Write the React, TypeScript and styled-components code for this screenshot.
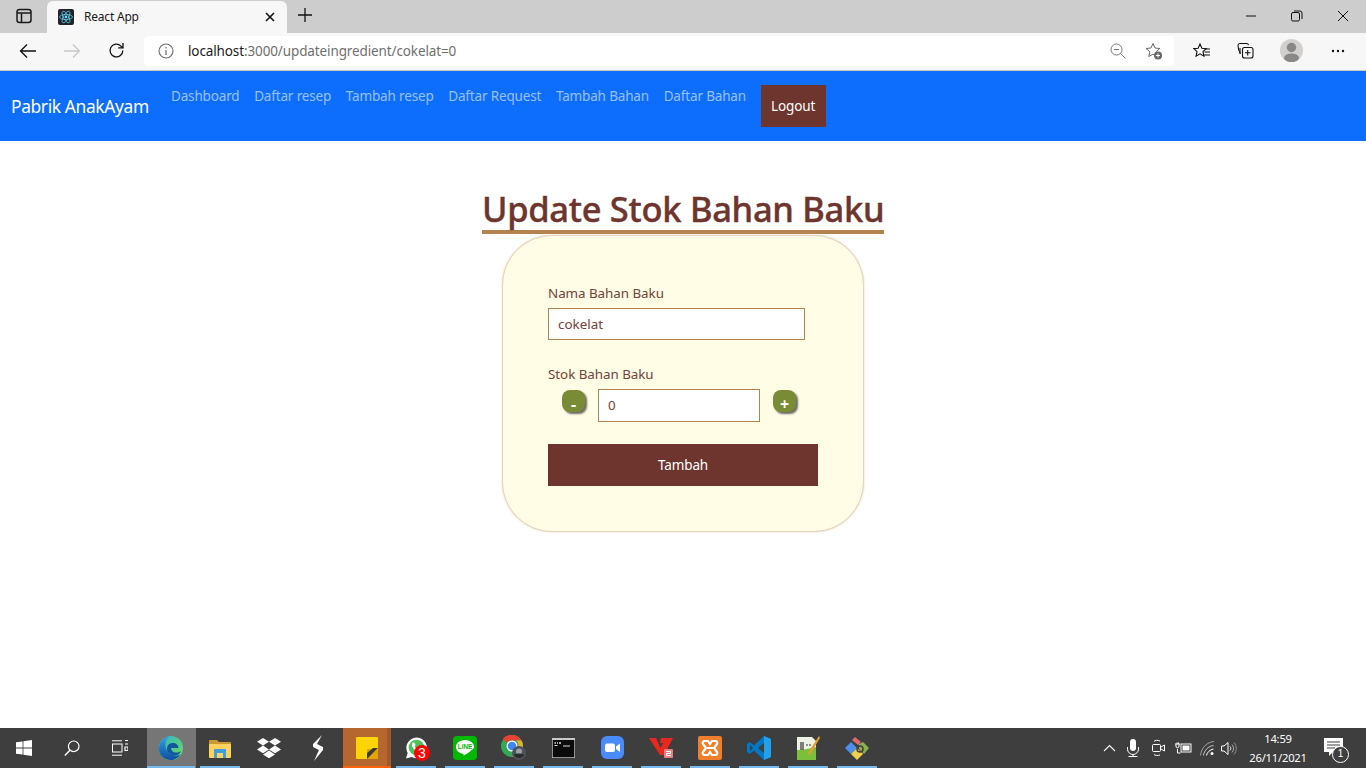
import React from "react";
import styled, { createGlobalStyle } from "styled-components";

const Global = createGlobalStyle`
  html, body { margin: 0; padding: 0; height: 100%; overflow: hidden; background: #fff; }
  #root { height: 100%; }
  * { box-sizing: border-box; }
  body { font-family: "Noto Sans", "Open Sans", sans-serif; }
`;

const Page = styled.div`
  height: 768px; width: 1366px; display: flex; flex-direction: column; overflow: hidden;
`;
const TabStrip = styled.div`
  height: 33px; background: #cdcdcd; display: flex; align-items: flex-end; flex: none;
`;
const SideToggle = styled.div`
  width: 47px; height: 33px; display: flex; align-items: center; justify-content: center; padding-bottom: 2px;
`;
const Tab = styled.div`
  width: 240px; height: 32px; background: #f7f7f7; border-radius: 6px 6px 0 0; display: flex; align-items: center;
  padding: 0 11px 1px; font-size: 12px; color: #1a1a1a;
`;
const TabTitle = styled.span`
  margin-left: 10px; flex: 1; font-size: 12px; letter-spacing: -0.2px;
`;
const NewTab = styled.div`
  width: 36px; height: 33px; display: flex; align-items: center; justify-content: center; padding-bottom: 4px;
`;
const Spacer = styled.div`flex: 1;`;
const WinBtn = styled.div`
  width: 46px; height: 33px; display: flex; align-items: center; justify-content: center; padding-bottom: 2px;
`;
const Toolbar = styled.div`
  height: 38px; flex: none; background: #f7f7f7; border-bottom: 1px solid #c9c9c9; display: flex; align-items: center; padding-bottom: 2px;
`;
const NavIcon = styled.div<{ $w: number }>`
  width: ${(p) => p.$w}px; height: 32px; display: flex; align-items: center; justify-content: center; flex: none;
`;
const Address = styled.div`
  width: 1030px; height: 30px; background: #fff; border-radius: 4px; display: flex; align-items: center; padding-left: 14px; flex: none;
`;
const Url = styled.span`
  margin-left: 14px; font-size: 13.5px; color: #6f6f6f; letter-spacing: -0.12px; flex: 1;
  b { font-weight: 400; color: #1c1c1c; }
`;
const AddrIcons = styled.div`
  display: flex; align-items: center; gap: 19px; padding-right: 11px;
`;
const Navbar = styled.nav`
  height: 70px; flex: none; background: #0d6efd; display: flex; align-items: flex-start; padding-left: 11px;
`;
const Brand = styled.a`
  font-size: 17.4px; color: #fff; margin-top: 22px; width: 160px; letter-spacing: -0.37px; line-height: 26px; flex: none;
`;
const NavLink = styled.a`
  font-size: 13.5px; color: rgba(255, 255, 255, 0.58); margin-top: 15px; margin-right: 14.7px; line-height: 20px; letter-spacing: -0.16px; white-space: nowrap;
`;
const Logout = styled.button`
  width: 65px; height: 42px; margin-top: 14px; background: #6d352d; color: #fff; border: 0; font: 13.5px "Noto Sans", sans-serif; letter-spacing: -0.1px; padding: 0;
`;
const Main = styled.main`
  flex: 1; background: #fff; display: flex; flex-direction: column; align-items: center; padding-top: 44px;
`;
const Title = styled.h1`
  margin: 0; height: 49px; width: 402px; border-bottom: 4px solid #b5834f; color: #6d352d; font-size: 34.5px; font-weight: 500; -webkit-text-stroke: 0.4px #6d352d; line-height: 48px; text-align: center; white-space: nowrap; letter-spacing: -0.3px;
`;
const Card = styled.div`
  width: 362px; height: 297px; background: #fffde6; border: 1px solid #e6d3bb; box-shadow: 0 0 2px #e3cfb4; border-radius: 50px; padding: 45px 0 0 45px; margin-top: 1px;
`;
const Label = styled.label`
  display: block; font-size: 13.4px; color: #74423a; line-height: 24px; margin-bottom: 3px; letter-spacing: -0.05px;
`;
const TextField = styled.div<{ $w: number; $h: number }>`
  width: ${(p) => p.$w}px; height: ${(p) => p.$h}px; background: #fff; border: 1px solid #b5834f; padding-left: 9px; font-size: 13.4px; color: #74423a; line-height: ${(p) => p.$h - 2}px; flex: none;
`;
const Stepper = styled.div`
  display: flex; align-items: flex-start; padding-left: 14px; height: 33px;
`;
const Round = styled.div<{ $before: number; $after: number }>`
  width: 23px; height: 22px; margin: 1px ${(p) => p.$after}px 0 ${(p) => p.$before}px; padding-top: 7px; border-radius: 8px; background: #7a8b36; box-shadow: 2px 2px 2px #6b6b63; color: #fff; font-size: 16px; font-weight: 700; text-align: center; line-height: 15px; flex: none;
`;
const Submit = styled.button`
  display: block; width: 270px; height: 42px; margin-top: 22px; background: #6d352d; color: #fff; border: 0; font: 13.5px "Noto Sans", sans-serif; letter-spacing: -0.1px; padding: 0 0 1px;
`;
const Gap = styled.div`height: 22px;`;
const Taskbar = styled.footer`
  height: 40px; flex: none; background: #3e3e3e; display: flex; align-items: stretch; color: #fff;
`;
const TaskIcon = styled.div<{ $w?: number; $mode?: string; $shift?: number }>`
  position: relative; width: ${(p) => p.$w ?? 49}px; flex: none; display: flex; align-items: center; justify-content: center; padding: 0 ${(p) => p.$shift ?? 1}px 1px 0;
  background: ${(p) => (p.$mode === "focus" ? "#767676" : p.$mode === "orange" ? "linear-gradient(90deg,#b5672f 0 44px,#a05a2a 44px 48px,#3e3e3e 48px)" : "transparent")};
  ${(p) => p.$mode === "focus" && "&::after{content:'';position:absolute;left:0;right:1px;bottom:0;height:2px;background:#76b9ed;}"}
  ${(p) => p.$mode === "orange" && "&::after{content:'';position:absolute;left:0;right:1px;bottom:0;height:2px;background:#f7630c;}"}
  ${(p) => p.$mode === "run" && "&::after{content:'';position:absolute;left:4px;right:5px;bottom:0;height:2px;background:#76b9ed;}"}
`;
const Badge = styled.span`
  position: absolute; left: 22px; top: 17px; width: 16px; height: 16px; border-radius: 50%; background: #f00; color: #fff; font-size: 14px; line-height: 16px; text-align: center; font-family: "Liberation Sans", sans-serif;
`;
const Tray = styled.div`
  display: flex; align-items: center; margin-left: auto; height: 100%;
`;
const TrayIcon = styled.div<{ $w: number }>`
  width: ${(p) => p.$w}px; display: flex; align-items: center; justify-content: center; flex: none;
`;
const Clock = styled.div`
  width: 78px; text-align: center; font-size: 11.2px; line-height: 19px; letter-spacing: -0.2px; color: #fff;
`;
const Notify = styled.div`
  position: relative; width: 32px; height: 100%; display: flex; align-items: center; justify-content: center; margin-right: 17px; padding-bottom: 2px;
`;
const NotifyCount = styled.span`
  position: absolute; left: 15px; top: 18px; width: 17px; height: 17px; border: 1.5px solid #fff; border-radius: 50%; background: #3e3e3e; font-size: 10px; line-height: 14px; text-align: center; color: #fff; font-family: "Liberation Sans", sans-serif;
`;

const s = { fill: "none", stroke: "#1a1a1a", strokeWidth: 1.3 };

const Icons = {
  side: <svg width="16" height="16" viewBox="0 0 16 16"><rect x="1" y="1.5" width="14" height="13" rx="2.5" {...s} strokeWidth={1.5}/><path d="M1 5h14M5.5 5v9.5" {...s} strokeWidth={1.5}/></svg>,
  react: <svg width="16" height="16" viewBox="0 0 16 16"><rect width="16" height="16" rx="2" fill="#20232a"/><circle cx="8" cy="8" r="1.4" fill="#61dafb"/><g fill="none" stroke="#61dafb" strokeWidth=".7"><ellipse cx="8" cy="8" rx="6.5" ry="2.6"/><ellipse cx="8" cy="8" rx="6.5" ry="2.6" transform="rotate(60 8 8)"/><ellipse cx="8" cy="8" rx="6.5" ry="2.6" transform="rotate(120 8 8)"/></g></svg>,
  close: <svg width="12" height="12" viewBox="0 0 12 12"><path d="M2 2l8 8M10 2l-8 8" stroke="#111" strokeWidth="1.6" fill="none"/></svg>,
  plus: <svg width="16" height="16" viewBox="0 0 16 16"><path d="M8 1v14M1 8h14" stroke="#111" strokeWidth="1.3" fill="none"/></svg>,
  min: <svg width="12" height="12" viewBox="0 0 12 12"><path d="M1 6h10" stroke="#111" strokeWidth="1" fill="none"/></svg>,
  restore: <svg width="12" height="12" viewBox="0 0 12 12"><rect x=".5" y="2.5" width="8" height="8.5" rx="1.5" fill="none" stroke="#111"/><path d="M3 1h6a2 2 0 0 1 2 2v6" fill="none" stroke="#111"/></svg>,
  x: <svg width="12" height="12" viewBox="0 0 12 12"><path d="M1 1l10 10M11 1L1 11" stroke="#111" strokeWidth="1" fill="none"/></svg>,
  back: <svg width="18" height="16" viewBox="0 0 18 16"><path d="M17 8H1.5M8 1.5L1.5 8 8 14.5" stroke="#111" strokeWidth="1.3" fill="none"/></svg>,
  fwd: <svg width="18" height="16" viewBox="0 0 18 16"><path d="M1 8h15.5M10 1.5L16.5 8 10 14.5" stroke="#c8c8c8" strokeWidth="1.3" fill="none"/></svg>,
  reload: <svg width="17" height="17" viewBox="0 0 17 17"><path d="M14.800 8.500a6.400 6.400 0 1 1-2-4.600l2 1.800" {...s} stroke="#111"/><path d="M15 1v4.800h-4.800" {...s} stroke="#111"/></svg>,
  info: <svg width="16" height="16" viewBox="0 0 16 16"><circle cx="8" cy="8" r="7" fill="none" stroke="#6b6b6b" strokeWidth="1.1"/><path d="M8 7v5" stroke="#6b6b6b" strokeWidth="1.2"/><circle cx="8" cy="4.800" r=".8" fill="#6b6b6b"/></svg>,
  zoom: <svg width="16" height="16" viewBox="0 0 16 16"><circle cx="6.500" cy="6.500" r="5.500" fill="none" stroke="#777" strokeWidth="1"/><path d="M10.500 10.500l5 5M3.800 6.500h5.400" stroke="#777" strokeWidth="1" fill="none"/></svg>,
  favAdd: <svg width="18" height="18" viewBox="0 0 18 18"><path d="M8 1.500l2 4.500 4.800.5-3.600 3.200 1 4.800L8 12.200l-4.200 2.300 1-4.800L1 6.500 5.900 6z" fill="none" stroke="#666" strokeWidth="1"/><circle cx="13" cy="13.500" r="4" fill="#666"/><path d="M13 11.500v4M11 13.500h4" stroke="#fff"/></svg>,
  favs: <svg width="18" height="16" viewBox="0 0 18 16"><path d="M7 1l1.900 4.200 4.300.4-3.200 3 .9 4.600L7 10.900l-3.900 2.300.9-4.600-3.200-3 4.300-.4z" fill="none" stroke="#111" strokeWidth="1.1"/><path d="M12 6h5M11.500 9h5.500M11 12h6" stroke="#111" strokeWidth="1"/></svg>,
  coll: <svg width="17" height="17" viewBox="0 0 17 17"><path d="M3 12V6M1 3.500a2 2 0 0 1 2-2h6.500a2 2 0 0 1 2 1.600" fill="none" stroke="#111" strokeWidth="1.1"/><path d="M1 3.500c0 3 1 6 2.500 8" fill="none" stroke="#111" strokeWidth="1.1"/><rect x="5.500" y="5.500" width="10.500" height="10.500" rx="2" fill="#f7f7f7" stroke="#111" strokeWidth="1.1"/><path d="M10.700 8v5.500M8 10.700h5.500" stroke="#111" strokeWidth="1.1"/></svg>,
  avatar: <svg width="23" height="23" viewBox="0 0 23 23"><defs><clipPath id="av"><circle cx="11.500" cy="11.500" r="11.500"/></clipPath></defs><circle cx="11.500" cy="11.500" r="11.500" fill="#d2d0ce"/><g clipPath="url(#av)" fill="#8a8886"><circle cx="11.500" cy="8.500" r="4.700"/><ellipse cx="11.500" cy="19" rx="7.500" ry="4.500"/></g></svg>,
  more: <svg width="14" height="4" viewBox="0 0 14 4"><circle cx="2" cy="2" r="1.200" fill="#111"/><circle cx="7" cy="2" r="1.200" fill="#111"/><circle cx="12" cy="2" r="1.200" fill="#111"/></svg>,
  win: <svg width="16" height="16" viewBox="0 0 16 16" fill="#fff"><path d="M0 2.300l6.600-.9v6.200H0zM7.400 1.300L16 0v7.600H7.400zM0 8.400h6.600v6.200L0 13.700zM7.400 8.400H16V16l-8.600-1.200z"/></svg>,
  search: <svg width="16" height="16" viewBox="0 0 16 16"><circle cx="9.700" cy="6.300" r="5.300" fill="none" stroke="#fff" strokeWidth="1.200"/><path d="M6 10.200L.8 15.400" stroke="#fff" strokeWidth="1.400"/></svg>,
  view: <svg width="16" height="16" viewBox="0 0 16 16" fill="none" stroke="#fff"><path d="M0 .8h10M0 15.200h10"/><rect x=".5" y="4" width="9.500" height="8"/><path d="M13 .5h3M13 4h3M13 7v3.500h3V7z" strokeWidth="1.200"/></svg>,
  edge: <svg width="24" height="24" viewBox="0 0 24 24"><defs><linearGradient id="e1" x1="0" y1="0" x2="1" y2="1"><stop offset="0" stopColor="#2fb5c8"/><stop offset="1" stopColor="#6fdc5a"/></linearGradient><linearGradient id="e2" x1="0" y1="0" x2="0" y2="1"><stop offset="0" stopColor="#2f9fe6"/><stop offset="1" stopColor="#0f4f9e"/></linearGradient></defs><circle cx="12" cy="12" r="12" fill="url(#e1)"/><path d="M0 12C.5 5 6 .5 11 .5c-3 1.500-5 5-4.500 9 .5 6 5 10 10 10 2 0 4-.5 5.500-1.500-2.500 3.500-6 6-10 6C4 24-.5 18 0 12z" fill="url(#e2)"/><path d="M8 13c0-4 2.500-6 6-6 3 0 5.500 2 5.500 5h-7.500c0 2.500 2 4.500 5 4.500 2 0 3.500-.5 5-1.500-1 3-4 4.500-6.500 4.500-4 0-7.500-3-7.500-6.500z" fill="#14579f"/></svg>,
  folder: <svg width="22" height="20" viewBox="0 0 22 20"><path d="M0 3a1 1 0 0 1 1-1h7l2 2h11a1 1 0 0 1 1 1v2H0z" fill="#c99a2e"/><path d="M0 6h22v13a1 1 0 0 1-1 1H1a1 1 0 0 1-1-1z" fill="#fdd35e"/><path d="M5 11h12v9h-3v-5H8v5H5z" fill="#3f9ee0"/></svg>,
  dropbox: <svg width="24" height="22" viewBox="0 0 24 22" fill="#fff"><path d="M6 1l6 3.800-6 3.800L0 4.800zM18 1l6 3.800-6 3.800-6-3.800zM0 12.400l6-3.800 6 3.800-6 3.800zM18 8.600l6 3.800-6 3.800-6-3.800zM6 17.400l6-3.800 6 3.800-6 3.800z"/></svg>,
  sublime: <svg width="12" height="26" viewBox="0 0 12 26" fill="#fff"><path d="M10 0L1 9v3l6 3L2 26l9-11v-3L5 9z"/></svg>,
  sticky: <svg width="22" height="22" viewBox="0 0 22 22"><path d="M1 0h20a1 1 0 0 1 1 1v20a1 1 0 0 1-1 1H1a1 1 0 0 1-1-1V1a1 1 0 0 1 1-1z" fill="#ffd500"/><path d="M22 12v9a1 1 0 0 1-1 1H11v-10z" fill="#e6a400"/><path d="M11 22V16l6-5h5z" fill="#3a3a3a"/><path d="M22 11v10a1 1 0 0 1-1 1h-9z" fill="#e6a400"/></svg>,
  whatsapp: <svg width="23" height="22" viewBox="0 0 23 22"><path d="M1 21.500l1.700-5.500A10.300 10.300 0 1 1 6.800 20z" fill="#fff"/><circle cx="11.500" cy="10.500" r="7.800" fill="#4bc15a"/><path d="M8 5.500c-1.500 1-1.700 3.300.2 5.800s4.500 4.500 6.800 4.200c1.500-.2 2.300-1.300 2.200-2.300l-2.600-1.400-1.200 1.100c-1.800-.7-3.100-2-3.800-3.800l1-1.200L9.400 5.500z" fill="#fff"/></svg>,
  line: <svg width="24" height="24" viewBox="0 0 24 24"><rect width="24" height="24" rx="4" fill="#00b900"/><path d="M12 4C7 4 3 7.200 3 11c0 3.400 3 6.200 7.200 6.900.5.100.5.700.3 1.800 1-.5 5-3 7-4.800 2-1.600 3.500-2.400 3.500-3.900 0-3.800-4-7-9-7z" fill="#fff"/><text x="12" y="13.300" textAnchor="middle" fontSize="6.300" fontWeight="700" fontFamily="Liberation Sans, sans-serif" fill="#00b900">LINE</text></svg>,
  chrome: <svg width="26" height="26" viewBox="0 0 26 26"><circle cx="11" cy="11" r="11" fill="#34a853"/><path d="M11 0a11 11 0 0 1 9.500 5.500H11A5.500 5.500 0 0 0 6 8L2 3.500A11 11 0 0 1 11 0z" fill="#ea4335"/><path d="M20.500 5.500A11 11 0 0 1 11 22l5-8a5.500 5.500 0 0 0-1-8.500z" fill="#e8b32a"/><circle cx="11" cy="11" r="5.500" fill="#fff"/><circle cx="11" cy="11" r="4.300" fill="#4285f4"/><circle cx="18" cy="18" r="7" fill="#4e5358"/><circle cx="18" cy="16.500" r="3" fill="#9aa0a6"/><path d="M13 20c3-2 7-2 10 0-2 4-8 4-10 0z" fill="#2a2a2a"/></svg>,
  cmd: <svg width="23" height="20" viewBox="0 0 23 20"><rect width="23" height="20" fill="#c9c9c9"/><rect x=".7" y="2" width="21.600" height="17.300" fill="#0b0b0b"/><path d="M2.500 5h1.500M5 5h1M7 5h2" stroke="#ddd" strokeWidth="1.300"/><path d="M2.500 7.500h3M11 8h7" stroke="#ddd"/></svg>,
  zoomApp: <svg width="23" height="23" viewBox="0 0 23 23"><rect width="23" height="23" rx="6" fill="#4a8cff"/><rect x="4" y="7.500" width="10" height="8.500" rx="2" fill="#fff"/><path d="M15 10.500l4-3v8.500l-4-3z" fill="#fff"/></svg>,
  v: <svg width="24" height="21" viewBox="0 0 24 21"><path d="M0 1h7l4.500 10L14 6h-3l1-5h12l-9 17h-4zM15 4h3l-2 3z" fill="#e8271f"/><rect x="15" y="12" width="9" height="9" rx="1" fill="#e78080"/><path d="M17 14.500h4.500v2h-4v2h4.500" stroke="#fff" fill="none"/></svg>,
  xampp: <svg width="24" height="24" viewBox="0 0 24 24"><rect width="24" height="24" rx="2" fill="#ef7f2a"/><path d="M6 5h4l2 3 2-3h4a2 2 0 0 1 1 3l-3 4 3 4a2 2 0 0 1-1 3h-4l-2-3-2 3H6a2 2 0 0 1-1-3l3-4-3-4a2 2 0 0 1 1-3z" fill="none" stroke="#fff" strokeWidth="2.200"/><path d="M8 12h8" stroke="#fff" strokeWidth="2"/></svg>,
  vscode: <svg width="24" height="24" viewBox="0 0 24 24"><path d="M17 0l7 3v18l-7 3L7 14.500 3 18l-3-2v-8l3-2 4 3.500z" fill="#0078c8"/><path d="M17 0l7 3v18l-7 3z" fill="#22a0ea"/><path d="M17 7l-6 5 6 5z" fill="#3e3e3e"/><path d="M3 9l3 3-3 3z" fill="#3e3e3e"/></svg>,
  notepad: <svg width="24" height="24" viewBox="0 0 24 24"><path d="M1 1h15l4 4v19H1z" fill="#eef2e4"/><path d="M1 14c5 0 12-1 19-3v13H1z" fill="#7cbf3a"/><path d="M5 6v8M7 6v8M10 9h2M13 9h2" stroke="#333" strokeWidth="1.200"/><path d="M23 0L13 15l-1 4 3-2L24 2z" fill="#e0a030"/></svg>,
  git: <svg width="24" height="24" viewBox="0 0 24 24"><path d="M0 12l6-6 6 6-6 6z" fill="#4d8ee8"/><path d="M14 8l4-2 6 6-5 6-5-5z" fill="#8bb14a"/><path d="M6 18l6-6 6 6-6 6z" fill="#f0d050"/><path d="M7 4l3-3 6 5-3 3z" fill="#e0686e"/><circle cx="15" cy="13" r="3" fill="none" stroke="#3e3e3e" strokeWidth="1.500"/></svg>,
  chevron: <svg width="13" height="8" viewBox="0 0 13 8"><path d="M1 7l5.500-5.500L12 7" fill="none" stroke="#fff" strokeWidth="1.100"/></svg>,
  mic: <svg width="12" height="18" viewBox="0 0 12 18"><rect x="3" y="0" width="6" height="12" rx="3" fill="#fff"/><path d="M.5 8v2a5.500 5.500 0 0 0 11 0V8M6 15.500V17M1.500 17.500h9" fill="none" stroke="#fff"/></svg>,
  cam: <svg width="13" height="18" viewBox="0 0 13 18" fill="none" stroke="#fff"><path d="M2 2.500C3 1 6 1 8 2M2 15.500c1 1.200 4 1.200 6 .5"/><rect x=".5" y="5.500" width="8" height="7" rx="1"/><path d="M9 8l3.500-2v6L9 10"/></svg>,
  batt: <svg width="17" height="13" viewBox="0 0 17 13"><path d="M0 2h5M1 2v3a2 2 0 0 0 3 0V2M2 .5V2M3.500.5V2M2.500 7v4h3" fill="none" stroke="#fff"/><rect x="6" y="2" width="10" height="8" fill="none" stroke="#fff"/><rect x="7.500" y="3.500" width="7" height="5" fill="#fff"/></svg>,
  wifi: <svg width="15" height="15" viewBox="0 0 15 15" fill="none" stroke="#fff"><path d="M.5 14.500C1 7 7 1 14 .5" opacity=".5"/><path d="M3.500 14.500c.5-5 5-9.500 10-10" opacity=".7"/><path d="M6.500 14.500c.5-3 3.500-6 7-6.500"/><circle cx="12" cy="12.500" r="1.500" fill="#fff" stroke="none"/></svg>,
  vol: <svg width="16" height="15" viewBox="0 0 16 15" fill="none" stroke="#fff"><path d="M.5 5h2.500L7 1.500v12L3 10H.5z"/><path d="M9 5.500c1 1.200 1 2.800 0 4"/><path d="M11 3.500c2 2.500 2 5.500 0 8" opacity=".6"/><path d="M13 1.500c3 3.500 3 8.500 0 12" opacity=".4"/></svg>,
  msg: <svg width="19" height="18" viewBox="0 0 19 18"><path d="M0 0h19v14H9l-4 4v-4H0z" fill="#fff"/><path d="M3 4h13M3 7h13M3 10h8" stroke="#3e3e3e"/></svg>,
};

const apps: { k: keyof typeof Icons; mode: string; badge?: string }[] = [
  { k: "edge", mode: "focus" },
  { k: "folder", mode: "run" },
  { k: "dropbox", mode: "" },
  { k: "sublime", mode: "" },
  { k: "sticky", mode: "orange" },
  { k: "whatsapp", mode: "run", badge: "3" },
  { k: "line", mode: "run" },
  { k: "chrome", mode: "run" },
  { k: "cmd", mode: "run" },
  { k: "zoomApp", mode: "run" },
  { k: "v", mode: "run" },
  { k: "xampp", mode: "run" },
  { k: "vscode", mode: "run" },
  { k: "notepad", mode: "run" },
  { k: "git", mode: "run" },
];

const links = ["Dashboard", "Daftar resep", "Tambah resep", "Daftar Request", "Tambah Bahan", "Daftar Bahan"];

export default function App() {
  return (
    <Page>
      <Global />
      <TabStrip>
        <SideToggle>{Icons.side}</SideToggle>
        <Tab>
          {Icons.react}
          <TabTitle>React App</TabTitle>
          {Icons.close}
        </Tab>
        <NewTab>{Icons.plus}</NewTab>
        <Spacer />
        <WinBtn>{Icons.min}</WinBtn>
        <WinBtn>{Icons.restore}</WinBtn>
        <WinBtn>{Icons.x}</WinBtn>
      </TabStrip>
      <Toolbar>
        <NavIcon $w={56}>{Icons.back}</NavIcon>
        <NavIcon $w={32}>{Icons.fwd}</NavIcon>
        <NavIcon $w={56}>{Icons.reload}</NavIcon>
        <Address>
          {Icons.info}
          <Url><b>localhost</b>:3000/updateingredient/cokelat=0</Url>
          <AddrIcons>{Icons.zoom}{Icons.favAdd}</AddrIcons>
        </Address>
        <NavIcon $w={56}>{Icons.favs}</NavIcon>
        <NavIcon $w={30}>{Icons.coll}</NavIcon>
        <NavIcon $w={62}>{Icons.avatar}</NavIcon>
        <NavIcon $w={32}>{Icons.more}</NavIcon>
      </Toolbar>
      <Navbar>
        <Brand>Pabrik AnakAyam</Brand>
        {links.map((l) => <NavLink key={l}>{l}</NavLink>)}
        <Logout>Logout</Logout>
      </Navbar>
      <Main>
        <Title>Update Stok Bahan Baku</Title>
        <Card>
          <Label>Nama Bahan Baku</Label>
          <TextField $w={257} $h={32}>cokelat</TextField>
          <Gap />
          <Label>Stok Bahan Baku</Label>
          <Stepper>
            <Round $before={0} $after={13}>-</Round>
            <TextField $w={162} $h={33}>0</TextField>
            <Round $before={13} $after={0}>+</Round>
          </Stepper>
          <Submit>Tambah</Submit>
        </Card>
      </Main>
      <Taskbar>
        <TaskIcon $w={48} $shift={0}>{Icons.win}</TaskIcon>
        <TaskIcon $w={48} $shift={0}>{Icons.search}</TaskIcon>
        <TaskIcon $w={51} $shift={4}>{Icons.view}</TaskIcon>
        {apps.map((a) => (
          <TaskIcon key={a.k} $mode={a.mode}>
            {Icons[a.k]}
            {a.badge && <Badge>{a.badge}</Badge>}
          </TaskIcon>
        ))}
        <Tray>
          <TrayIcon $w={24}>{Icons.chevron}</TrayIcon>
          <TrayIcon $w={24}>{Icons.mic}</TrayIcon>
          <TrayIcon $w={26}>{Icons.cam}</TrayIcon>
          <TrayIcon $w={24}>{Icons.batt}</TrayIcon>
          <TrayIcon $w={24}>{Icons.wifi}</TrayIcon>
          <TrayIcon $w={20}>{Icons.vol}</TrayIcon>
          <Clock>14:59<br />26/11/2021</Clock>
          <Notify>{Icons.msg}<NotifyCount>1</NotifyCount></Notify>
        </Tray>
      </Taskbar>
    </Page>
  );
}
